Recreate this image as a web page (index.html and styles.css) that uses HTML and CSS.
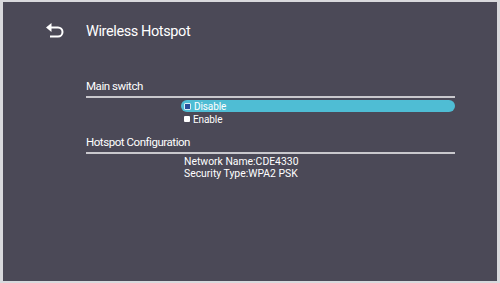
FILE: index.html
```html
<!DOCTYPE html>
<html lang="en">
<head>
    <meta charset="UTF-8">
    <meta name="viewport" content="width=device-width, initial-scale=1.0">
    <title>Wireless Hotspot</title>
    <link rel="stylesheet" href="styles.css">
</head>
<body>
    <div class="screen">
        <div class="header">
            <svg class="back" width="18" height="16" viewBox="0 0 18 16">
                <path d="M4.5 4.5 H12 A4.5 4.5 0 0 1 12 13.5 H4" fill="none" stroke="#fff" stroke-width="2"/>
                <path d="M0 4.5 L5.5 0 V9 Z" fill="#fff"/>
            </svg>
            <h1 class="title">Wireless Hotspot</h1>
        </div>

        <div class="section">
            <div class="section-title">Main switch</div>
            <div class="options">
                <div class="option selected">
                    <span class="box checked"></span>Disable
                </div>
                <div class="option">
                    <span class="box"></span>Enable
                </div>
            </div>
        </div>

        <div class="section">
            <div class="section-title">Hotspot Configuration</div>
            <div class="info">
                <div>Network Name:CDE4330</div>
                <div>Security Type:WPA2 PSK</div>
            </div>
        </div>
    </div>
</body>
</html>
```

FILE: styles.css
```css
body {
    margin: 0;
    background-color: #d9d9dd;
    font-family: Roboto, "Liberation Sans", sans-serif;
}

.screen {
    margin: 2px 3px 2px 3px;
    height: 279px;
    background-color: #4b4957;
    color: #fff;
    box-sizing: border-box;
    padding: 19px 0 0 0;
}

.header {
    display: flex;
    align-items: center;
    height: 20px;
}

.back {
    margin-left: 43px;
    margin-right: 22px;
}

.title {
    font-size: 14.5px;
    letter-spacing: -0.4px;
    font-weight: normal;
    margin: 0;
}

.section {
    margin: 0 42px 0 83px;
}

.header + .section {
    margin-top: 37px;
}

.section-title {
    font-size: 11.5px;
    letter-spacing: -0.45px;
    line-height: 16px;
    padding-bottom: 2px;
    border-bottom: 2px solid #c9c8cd;
}

.options {
    padding: 2px 0 8px 95px;
}

.option {
    display: flex;
    align-items: center;
    height: 12px;
    font-size: 10px;
    letter-spacing: -0.1px;
    padding-left: 3px;
    margin-bottom: 1px;
}

.option.selected {
    background-color: #4fbdd4;
    border-radius: 6px;
}

.box {
    width: 6px;
    height: 6px;
    background-color: #fff;
    border-radius: 1px;
    margin-right: 3px;
}

.box.checked {
    width: 5px;
    height: 5px;
    background-color: #2a4f9a;
    border: 1px solid #d8eef6;
    margin-right: 3px;
}

.info {
    padding: 2px 0 0 98px;
    font-size: 10.4px;
    line-height: 11.5px;
}
```
